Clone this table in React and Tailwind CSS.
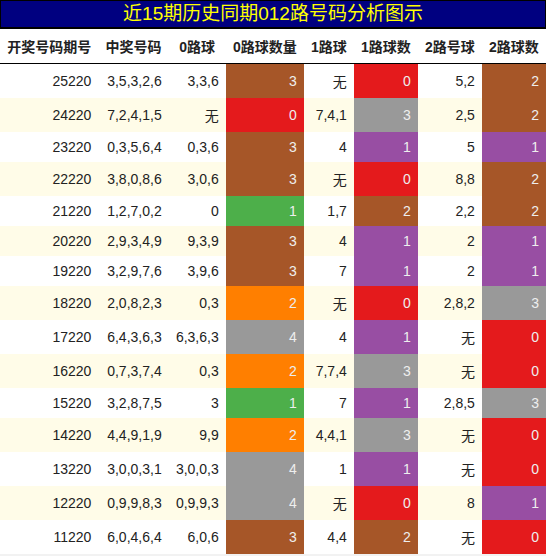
import React from 'react';

const C = {
  br: 'bg-[#a65628]',
  rd: 'bg-[#e41a1c]',
  gr: 'bg-[#4daf4a]',
  pu: 'bg-[#984ea3]',
  or: 'bg-[#ff7f00]',
  gy: 'bg-[#999999]',
};

// 期号, 中奖号码, 0路球, [0路数量, 色], 1路球, [1路数, 色], 2路号球, [2路数, 色]
const rows = [
  ['25220', '3,5,3,2,6', '3,3,6', [3, 'br'], '无', [0, 'rd'], '5,2', [2, 'br']],
  ['24220', '7,2,4,1,5', '无', [0, 'rd'], '7,4,1', [3, 'gy'], '2,5', [2, 'br']],
  ['23220', '0,3,5,6,4', '0,3,6', [3, 'br'], '4', [1, 'pu'], '5', [1, 'pu']],
  ['22220', '3,8,0,8,6', '3,0,6', [3, 'br'], '无', [0, 'rd'], '8,8', [2, 'br']],
  ['21220', '1,2,7,0,2', '0', [1, 'gr'], '1,7', [2, 'br'], '2,2', [2, 'br']],
  ['20220', '2,9,3,4,9', '9,3,9', [3, 'br'], '4', [1, 'pu'], '2', [1, 'pu']],
  ['19220', '3,2,9,7,6', '3,9,6', [3, 'br'], '7', [1, 'pu'], '2', [1, 'pu']],
  ['18220', '2,0,8,2,3', '0,3', [2, 'or'], '无', [0, 'rd'], '2,8,2', [3, 'gy']],
  ['17220', '6,4,3,6,3', '6,3,6,3', [4, 'gy'], '4', [1, 'pu'], '无', [0, 'rd']],
  ['16220', '0,7,3,7,4', '0,3', [2, 'or'], '7,7,4', [3, 'gy'], '无', [0, 'rd']],
  ['15220', '3,2,8,7,5', '3', [1, 'gr'], '7', [1, 'pu'], '2,8,5', [3, 'gy']],
  ['14220', '4,4,9,1,9', '9,9', [2, 'or'], '4,4,1', [3, 'gy'], '无', [0, 'rd']],
  ['13220', '3,0,0,3,1', '3,0,0,3', [4, 'gy'], '1', [1, 'pu'], '无', [0, 'rd']],
  ['12220', '0,9,9,8,3', '0,9,9,3', [4, 'gy'], '无', [0, 'rd'], '8', [1, 'pu']],
  ['11220', '6,0,4,6,4', '6,0,6', [3, 'br'], '4,4', [2, 'br'], '无', [0, 'rd']],
];

const heads = ['开奖号码期号', '中奖号码', '0路球', '0路球数量', '1路球', '1路球数', '2路号球', '2路球数'];

const Plain = ({ v }) => <td className="px-[7px] py-[7px] text-right text-[#222]">{v}</td>;

const Colored = ({ v }) => (
  <td className={`px-[7px] py-[7px] text-right text-[#eeeeee] ${C[v[1]]}`}>{v[0]}</td>
);

export default function App() {
  return (
    <div className="w-[546px] min-h-[556px] bg-[#f2f2f2] font-['Liberation_Sans','Noto_Sans_CJK_SC',sans-serif]">
      <div className="h-[29px] border border-black border-b-2 bg-[#000080] text-[#ffff00] text-[19px] leading-[26px] text-center">
        近15期历史同期012路号码分析图示
      </div>
      <table className="w-full border-collapse text-[14px] leading-[normal] bg-white">
        <thead>
          <tr className="border-b border-black">
            {heads.map((h) => (
              <th key={h} className="px-[7px] py-[7px] font-bold text-center text-[#222] whitespace-nowrap">
                {h}
              </th>
            ))}
          </tr>
        </thead>
        <tbody>
          {rows.map((r, i) => (
            <tr key={r[0]} className={i % 2 ? 'bg-[#fffce8]' : 'bg-white'}>
              <Plain v={r[0]} />
              <Plain v={r[1]} />
              <Plain v={r[2]} />
              <Colored v={r[3]} />
              <Plain v={r[4]} />
              <Colored v={r[5]} />
              <Plain v={r[6]} />
              <Colored v={r[7]} />
            </tr>
          ))}
        </tbody>
      </table>
    </div>
  );
}
